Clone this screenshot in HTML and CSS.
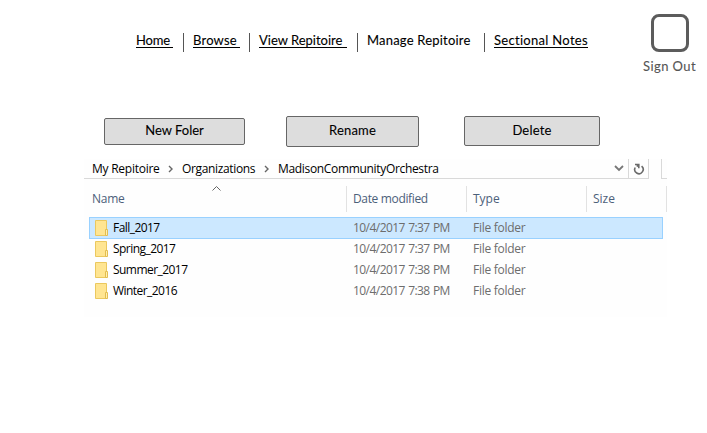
FILE: index.html
```html
<!DOCTYPE html>
<html lang="en">
<head>
<meta charset="utf-8">
<title>Manage Repitoire</title>
<link rel="stylesheet" href="styles.css">
</head>
<body>
<header class="header">
  <nav class="nav">
    <a class="link home">Home</a>
    <a class="link browse">Browse</a>
    <a class="link view">View Repitoire</a>
    <a class="link manage current">Manage Repitoire</a>
    <a class="link notes">Sectional Notes</a>
  </nav>
  <div class="signout"><span class="box"></span><span class="signout-label">Sign Out</span></div>
</header>
<div class="actions">
  <button class="btn new">New Foler</button>
  <button class="btn rename">Rename</button>
  <button class="btn delete">Delete</button>
</div>
<main class="explorer">
  <div class="address">
    <div class="path">
      <span class="crumb c1">My Repitoire</span>
      <svg class="sep" viewBox="0 0 5 8"><path d="M1 1l3 3-3 3"/></svg>
      <span class="crumb c2">Organizations</span>
      <svg class="sep" viewBox="0 0 5 8"><path d="M1 1l3 3-3 3"/></svg>
      <span class="crumb c3">MadisonCommunityOrchestra</span>
      <svg class="down" viewBox="0 0 10 7"><path d="M1 1l4 4 4-4"/></svg>
    </div>
    <div class="refresh"><svg viewBox="0 0 12 12"><path d="M2.2 4.5A4.2 4.2 0 1 0 8.6 3.2M2 1.5H5.8V5.3M5.8 1.5L3.8 3.5"/></svg></div>
    <div class="search"></div>
  </div>
  <div class="columns">
    <div class="col"><span class="h1">Name</span><svg class="sort" viewBox="0 0 9 5"><path d="M.5 4.5l4-4 4 4"/></svg></div>
    <div class="col"><span class="h2">Date modified</span></div>
    <div class="col"><span class="h3">Type</span></div>
    <div class="col"><span class="h4">Size</span></div>
  </div>
  <div class="rows">
    <div class="row selected"><svg class="folder" viewBox="0 0 13 16"><path class="back" d="M.5.5h11v15H.5z"/><path class="tab" d="M10.5 9.5h2v6h-2z"/></svg><span class="name">Fall_2017</span><span class="date">10/4/2017 7:37 PM</span><span class="type">File folder</span></div>
    <div class="row"><svg class="folder" viewBox="0 0 13 16"><path class="back" d="M.5.5h11v15H.5z"/><path class="tab" d="M10.5 9.5h2v6h-2z"/></svg><span class="name">Spring_2017</span><span class="date">10/4/2017 7:37 PM</span><span class="type">File folder</span></div>
    <div class="row"><svg class="folder" viewBox="0 0 13 16"><path class="back" d="M.5.5h11v15H.5z"/><path class="tab" d="M10.5 9.5h2v6h-2z"/></svg><span class="name">Summer_2017</span><span class="date">10/4/2017 7:38 PM</span><span class="type">File folder</span></div>
    <div class="row"><svg class="folder" viewBox="0 0 13 16"><path class="back" d="M.5.5h11v15H.5z"/><path class="tab" d="M10.5 9.5h2v6h-2z"/></svg><span class="name">Winter_2016</span><span class="date">10/4/2017 7:38 PM</span><span class="type">File folder</span></div>
  </div>
</main>
</body>
</html>
```
FILE: styles.css
```css
* { box-sizing: border-box; }
body { margin: 0; background: #fff; font: 12px "Open Sans", sans-serif; color: #000; }
svg { display: block; fill: none; flex: none; }

.header { display: flex; justify-content: space-between; height: 116px; padding-left: 136px; font-family: Lato, sans-serif; font-weight: 400; }
.nav { display: flex; padding-top: 33px; }
.link { height: 15px; line-height: 15px; font-size: 13px; letter-spacing: .2px; border-bottom: 1px solid #000; white-space: nowrap; -webkit-text-stroke: .1px; }
.link + .link { margin-left: 20px; position: relative; }
.link + .link::before { content: ""; position: absolute; left: -10px; top: 0; width: 1px; height: 19px; background: #555; }
.link.home { width: 37px; letter-spacing: -.2px; }
.browse { width: 47px; }
.link.view { width: 88px; margin-left: 19px; letter-spacing: 0; }
.manage { width: 103px; }
.link.current { border-color: transparent; }
.link.notes { width: 94px; margin-left: 24px; letter-spacing: .3px; }

.signout { width: 75px; padding-top: 14px; display: flex; flex-direction: column; align-items: center; color: #555; }
.box { width: 38px; height: 38px; border: 3px solid #5c5c5c; border-radius: 8px; }
.signout-label { margin-top: 6px; font-size: 13px; letter-spacing: .4px; line-height: 16px; -webkit-text-stroke: .1px; }

.actions { display: flex; align-items: flex-start; height: 43px; padding-left: 104px; }
.btn { padding: 0 0 2px; border: 1px solid #666; border-radius: 2px; background: #ddd; color: #000; font: 400 13px Lato, sans-serif; letter-spacing: .2px; -webkit-text-stroke: .1px; }
.new { width: 141px; height: 27px; margin: 2px 41px 0 0; padding-bottom: 3px; letter-spacing: 0; }
.rename { width: 133px; height: 31px; margin-right: 45px; padding-bottom: 3px; }
.delete { width: 136px; height: 30px; }

.explorer { width: 583px; height: 158px; margin-left: 84px; background: #fefefe; }
.address { display: flex; height: 20px; }
.path { display: flex; align-items: center; width: 544px; padding-left: 8px; border-bottom: 1px solid #d9d9d9; }
.crumb { flex: none; line-height: 18px; white-space: nowrap; letter-spacing: -.33px; }
.c1 { width: 76px; letter-spacing: -.25px; }
.c2 { width: 82px; letter-spacing: -.35px; }
.c3 { width: 336px; }
.sep { width: 5px; height: 8px; margin-right: 9px; stroke: #666; stroke-width: 1.4; }
.down { width: 10px; height: 7px; stroke: #777; stroke-width: 1.8; }
.refresh { width: 21px; padding: 4px 0 0 4px; border: solid #d9d9d9; border-width: 0 1px 1px; }
.refresh svg { width: 12px; height: 12px; stroke: #6a6a6a; stroke-width: 1.6; }
.search { width: 6px; margin-left: 12px; border: solid #d9d9d9; border-width: 0 0 1px 1px; }

.columns { display: grid; grid-template-columns: 263px 120px 120px 80px; height: 33px; padding-top: 7px; color: #4c607a; }
.col { position: relative; padding-left: 6px; line-height: 25px; border-right: 1px solid #e2e2e2; white-space: nowrap; }
.col:first-child { padding-left: 8px; }
.h1 { letter-spacing: -.25px; }
.h2 { letter-spacing: -.35px; }
.sort { position: absolute; left: 128px; top: 0; width: 9px; height: 5px; stroke: #666; }

.rows { padding: 5px 4px 0 5px; }
.row { display: grid; grid-template-columns: 18px 240px 120px 1fr; align-items: center; height: 21px; padding: 0 1px 0 6px; line-height: 20px; white-space: nowrap; }
.selected { height: 22px; margin-bottom: -1px; border: 1px solid #99d1ff; padding: 0 0 0 5px; background: #cce8ff; }
.folder { width: 13px; height: 16px; }
.back { fill: #ffe591; stroke: #ebc85e; }
.tab { fill: #fff0b0; stroke: #e3bd50; }
.name { letter-spacing: -.55px; }
.date, .type { color: #6d6d6d; }
.date { letter-spacing: -.55px; word-spacing: .7px; }
.type { letter-spacing: -.27px; }
```
